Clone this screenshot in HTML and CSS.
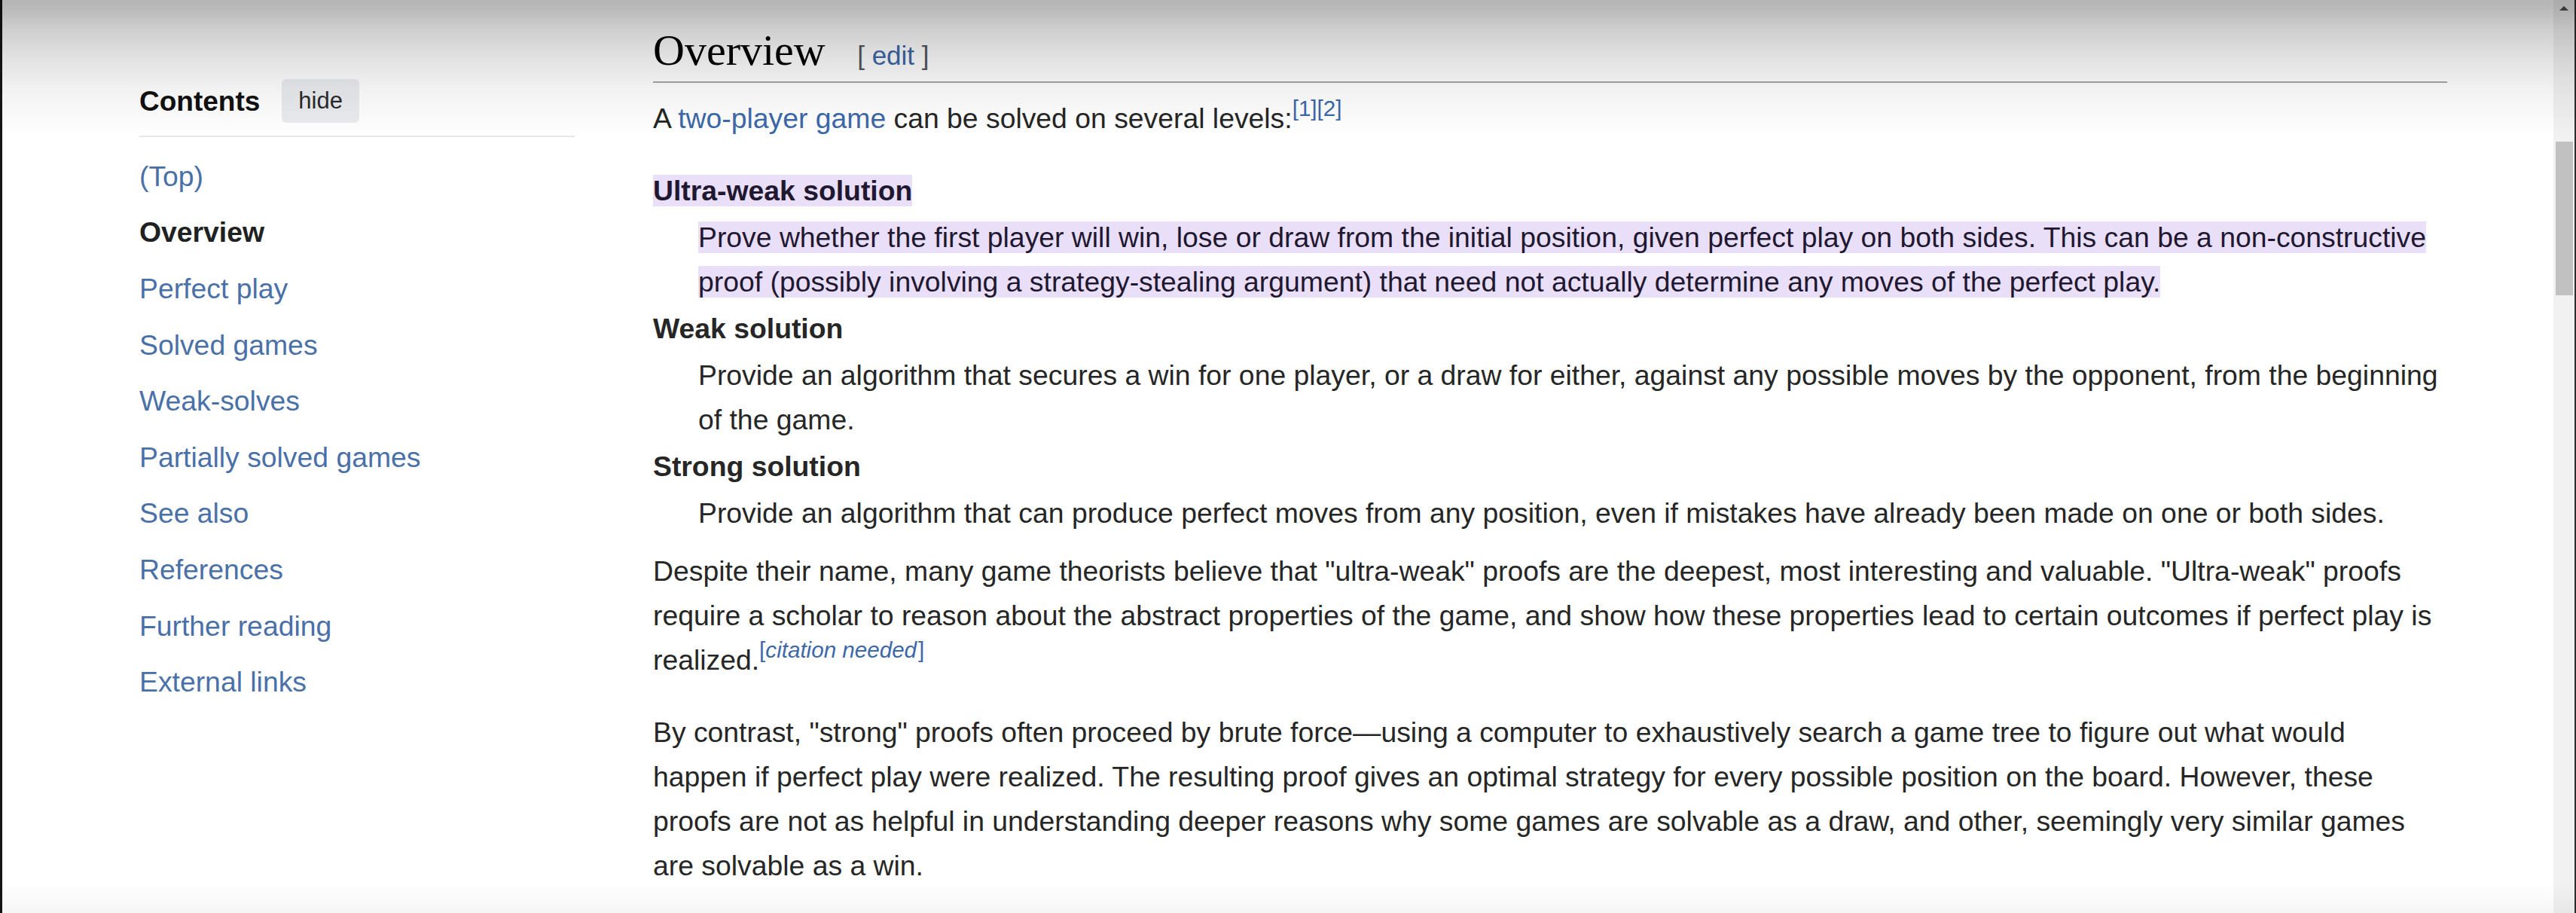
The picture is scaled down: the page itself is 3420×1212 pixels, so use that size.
FILE: index.html
```html
<!DOCTYPE html>
<html lang="en">
<head>
<meta charset="utf-8">
<title>Solved game – Overview</title>
<link rel="stylesheet" href="styles.css">
</head>
<body>
<div class="page">
  <nav class="toc">
    <div class="toc-head">
      <span class="toc-title">Contents</span>
      <button class="toc-hide" type="button">hide</button>
    </div>
    <ul class="toc-list">
      <li><a href="#top">(Top)</a></li>
      <li class="active">Overview</li>
      <li><a href="#perfect">Perfect play</a></li>
      <li><a href="#solved">Solved games</a></li>
      <li><a href="#weak">Weak-solves</a></li>
      <li><a href="#partial">Partially solved games</a></li>
      <li><a href="#see">See also</a></li>
      <li><a href="#refs">References</a></li>
      <li><a href="#further">Further reading</a></li>
      <li><a href="#ext">External links</a></li>
    </ul>
  </nav>
  <main class="content">
    <h2 class="heading">Overview <span class="editsection">[ <a href="#edit">edit</a> ]</span></h2>
    <p>A <a href="#tpg">two-player game</a> can be solved on several levels:<sup class="ref"><a href="#r1">[1]</a><a href="#r2">[2]</a></sup></p>
    <dl>
      <dt><span class="mark">Ultra-weak solution</span></dt>
      <dd><span class="mark">Prove whether the first player will win, lose or draw from the initial position, given perfect play on both sides. This can be a non-constructive proof (possibly involving a strategy-stealing argument) that need not actually determine any moves of the perfect play.</span></dd>
      <dt>Weak solution</dt>
      <dd>Provide an algorithm that secures a win for one player, or a draw for either, against any possible moves by the opponent, from the beginning of the game.</dd>
      <dt>Strong solution</dt>
      <dd>Provide an algorithm that can produce perfect moves from any position, even if mistakes have already been made on one or both sides.</dd>
    </dl>
    <p>Despite their name, many game theorists believe that "ultra-weak" proofs are the deepest, most interesting and valuable. "Ultra-weak" proofs require a scholar to reason about the abstract properties of the game, and show how these properties lead to certain outcomes if perfect play is realized.<sup class="ref"><a href="#cn" class="cn-link">[<i class="cn">citation needed</i>]</a></sup></p>
    <p>By contrast, "strong" proofs often proceed by brute force—using a computer to exhaustively search a game tree to figure out what would happen if perfect play were realized. The resulting proof gives an optimal strategy for every possible position on the board. However, these proofs are not as helpful in understanding deeper reasons why some games are solvable as a draw, and other, seemingly very similar games are solvable as a win.</p>
  </main>
</div>
<div class="scrollbar">
  <span class="sb-arrow"></span>
  <span class="sb-thumb"></span>
</div>
<div class="shade-top"></div>
<div class="shade-bottom"></div>
</body>
</html>
```

FILE: styles.css
```css
html, body {
  margin: 0;
  padding: 0;
  height: 100%;
}

body {
  display: flex;
  height: 100vh;
  overflow: hidden;
  background: #ffffff;
  border-left: 3px solid #151515;
  box-sizing: border-box;
  font-family: "Liberation Sans", Arial, sans-serif;
  font-size: 37.35px;
  line-height: 59px;
  color: #262626;
}

a {
  color: #3d68a8;
  text-decoration: none;
}

.page {
  flex: 1;
  display: flex;
  padding-left: 182px;
  min-width: 0;
}

/* ---------- table of contents ---------- */
.toc {
  flex: none;
  width: 578px;
  padding-top: 105px;
}

.toc-head {
  display: flex;
  align-items: center;
  gap: 29px;
  height: 58px;
  padding-bottom: 17px;
  border-bottom: 2px solid #e6e6e6;
}

.toc-title {
  font-size: 37px;
  font-weight: bold;
  color: #111;
}

.toc-hide {
  height: 58px;
  padding: 0 22px;
  border: none;
  border-radius: 6px;
  background: #eaecf0;
  color: #2a2a2a;
  font-family: "Liberation Sans", Arial, sans-serif;
  font-size: 31px;
  line-height: 58px;
}

.toc-list {
  list-style: none;
  margin: 0;
  padding: 15px 0 0;
}

.toc-list li {
  padding: 7.8px 0;
  line-height: 59px;
}

.toc-list a {
  color: #4a70a8;
}

.toc-list .active {
  font-weight: bold;
  color: #202122;
}

/* ---------- article ---------- */
.content {
  flex: none;
  width: 2376px;
  margin-left: 104px;
  padding-top: 32px;
}

.heading {
  margin: 0 -6px 18.6px 0;
  padding-bottom: 5.6px;
  border-bottom: 2px solid #a8a8a8;
  font-family: "Liberation Serif", "Times New Roman", serif;
  font-weight: normal;
  font-size: 58px;
  line-height: 70px;
  color: #000;
}

.editsection {
  margin-left: 28px;
  font-family: "Liberation Sans", Arial, sans-serif;
  font-size: 35px;
  line-height: 1;
  color: #54595d;
}

.content p {
  margin: 0 0 37px;
}

.content dl {
  margin: 0 0 18px;
}

.content dt {
  font-weight: bold;
  margin-bottom: 3px;
}

.content dd {
  margin: 0 0 3px 60px;
}

.mark {
  background: #e9dff9;
  color: #1f1830;
}

.ref {
  font-size: 29.6px;
  line-height: 1;
  vertical-align: 16px;
  color: #3d68a8;
}

.cn {
  font-style: italic;
  padding-right: 2px;
}

/* ---------- scrollbar ---------- */
.scrollbar {
  flex: none;
  width: 30px;
  height: 100vh;
  display: flex;
  flex-direction: column;
  align-items: center;
  padding-top: 8px;
  box-sizing: border-box;
  background: #f1f1f1;
  border-right: 2px solid #2e2e2e;
}

.sb-arrow {
  width: 0;
  height: 0;
  border-left: 6.5px solid transparent;
  border-right: 6.5px solid transparent;
  border-bottom: 6px solid #505050;
}

.sb-thumb {
  width: 23px;
  height: 204px;
  margin-top: 174px;
  background: #c1c1c1;
}

/* ---------- screen shading ---------- */
.shade-top {
  position: fixed;
  top: 0;
  left: 0;
  right: 0;
  height: 180px;
  pointer-events: none;
  background: linear-gradient(to bottom,
    rgba(0, 0, 0, 0.29) 0px,
    rgba(0, 0, 0, 0.27) 12px,
    rgba(0, 0, 0, 0.19) 40px,
    rgba(0, 0, 0, 0.11) 80px,
    rgba(0, 0, 0, 0.05) 120px,
    rgba(0, 0, 0, 0) 180px);
}

.shade-bottom {
  position: fixed;
  bottom: 0;
  left: 0;
  right: 0;
  height: 40px;
  pointer-events: none;
  background: linear-gradient(to top, rgba(0, 0, 0, 0.035), rgba(0, 0, 0, 0));
}
```
